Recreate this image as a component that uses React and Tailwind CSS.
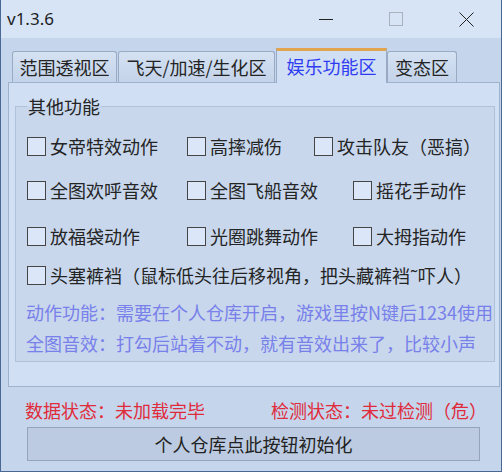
const cjk = "font-['Noto_Sans_CJK_SC','Noto_Sans',sans-serif]";

function Check({ label, w }) {
  return (
    <div className={`flex items-center ${w}`}>
      <span className="w-[19px] h-[19px] border border-[#454545] bg-[#dbe7f8] mr-[4px] shrink-0" />
      <span className="text-[18px] leading-[20px] text-[#242424] whitespace-nowrap">{label}</span>
    </div>
  );
}

const tabs = [
  { name: '范围透视区', w: 'w-[105px] ml-[4px]' },
  { name: '飞天/加速/生化区', w: 'w-[157px] ml-[1px]' },
  { name: '娱乐功能区', w: 'w-[111px] ml-[1px]', active: true },
  { name: '变态区', w: 'w-[70px]' },
];

export default function App() {
  return (
    <div className={`w-[502px] h-[472px] flex flex-col bg-[#c5d5eb] border-l border-r border-b border-[#4a6894] ${cjk}`}>
      {/* title bar */}
      <div className="h-[38px] shrink-0 flex items-center bg-[#d6e4f6]">
        <span className="pl-[6px] text-[17px] text-[#1e1e1e] font-['Noto_Sans',sans-serif]">v1.3.6</span>
        <div className="ml-auto flex h-full">
          <div className="w-[70px] flex items-center justify-center">
            <span className="w-[14px] h-px bg-[#222]" />
          </div>
          <div className="w-[70px] flex items-center justify-center">
            <span className="w-[14px] h-[14px] border border-[#a9b1bc]" />
          </div>
          <div className="w-[70px] flex items-center justify-center">
            <svg width="15" height="15" viewBox="0 0 15 15">
              <path d="M0.5 0.5 L14.5 14.5 M14.5 0.5 L0.5 14.5" stroke="#222" strokeWidth="1" fill="none" />
            </svg>
          </div>
        </div>
      </div>

      {/* tabs */}
      <div className="mt-[10px] h-[34px] flex items-end ml-[7px]">
        {tabs.map((t) =>
          t.active ? (
            <div
              key={t.name}
              className={`${t.w} relative z-10 -mb-px h-[35px] flex items-center justify-center bg-[#d0dff3] border-x border-[#98aac4] border-t-[3px] border-t-[#e0a54e] text-[18px] text-[#2f3cf2]`}
            >
              <span className="-mt-[2px]">{t.name}</span>
            </div>
          ) : (
            <div
              key={t.name}
              className={`${t.w} h-[31px] flex items-center justify-center rounded-t-[3px] border border-b-0 border-[#98aac4] bg-gradient-to-b from-[#d5e2f3] to-[#c3d3e9] text-[18px] text-[#242424]`}
            >
              {t.name}
            </div>
          )
        )}
      </div>

      {/* tab panel */}
      <div className="ml-[7px] mr-[1px] h-[305px] shrink-0 border border-[#9fb3cd] bg-[#d0dff3] flex flex-col">
        <fieldset className="mt-[13px] ml-[6px] mr-[4px] border border-[#b0c1d8] bg-[#c8d7ec] pb-[2px]">
          <legend className="ml-[11px] px-[1px] text-[18px] leading-[20px] text-[#242424]">其他功能</legend>
          <div className="pl-[11px]">
            <div className="mt-[20px] h-[20px] flex">
              <Check label="女帝特效动作" w="w-[160px]" />
              <Check label="高摔减伤" w="w-[127px]" />
              <Check label="攻击队友（恶搞）" w="" />
            </div>
            <div className="mt-[24px] h-[20px] flex">
              <Check label="全图欢呼音效" w="w-[160px]" />
              <Check label="全图飞船音效" w="w-[166px]" />
              <Check label="摇花手动作" w="" />
            </div>
            <div className="mt-[26px] h-[20px] flex">
              <Check label="放福袋动作" w="w-[160px]" />
              <Check label="光圈跳舞动作" w="w-[166px]" />
              <Check label="大拇指动作" w="" />
            </div>
            <div className="mt-[19px] h-[20px] flex">
              <Check label="头塞裤裆（鼠标低头往后移视角，把头藏裤裆˜吓人）" w="" />
            </div>
          </div>
          <div className="mt-[12px] pl-[10px] text-[18px] leading-[31px] text-[#7880ea] whitespace-nowrap">
            <div>动作功能：需要在个人仓库开启，游戏里按N键后1234使用</div>
            <div>全图音效：打勾后站着不动，就有音效出来了，比较小声</div>
          </div>
        </fieldset>
      </div>

      {/* status */}
      <div className="mt-[11px] h-[24px] flex items-center text-[18px] text-[#e02b3b] whitespace-nowrap">
        <span className="pl-[24px] w-[270px]">数据状态：未加载完毕</span>
        <span>检测状态：未过检测（危）</span>
      </div>

      <button className="mt-[5px] ml-[26px] w-[453px] h-[34px] border border-[#95a4ba] bg-[#bccbe1] text-[18px] text-[#222] flex items-center justify-center">
        个人仓库点此按钮初始化
      </button>
    </div>
  );
}
